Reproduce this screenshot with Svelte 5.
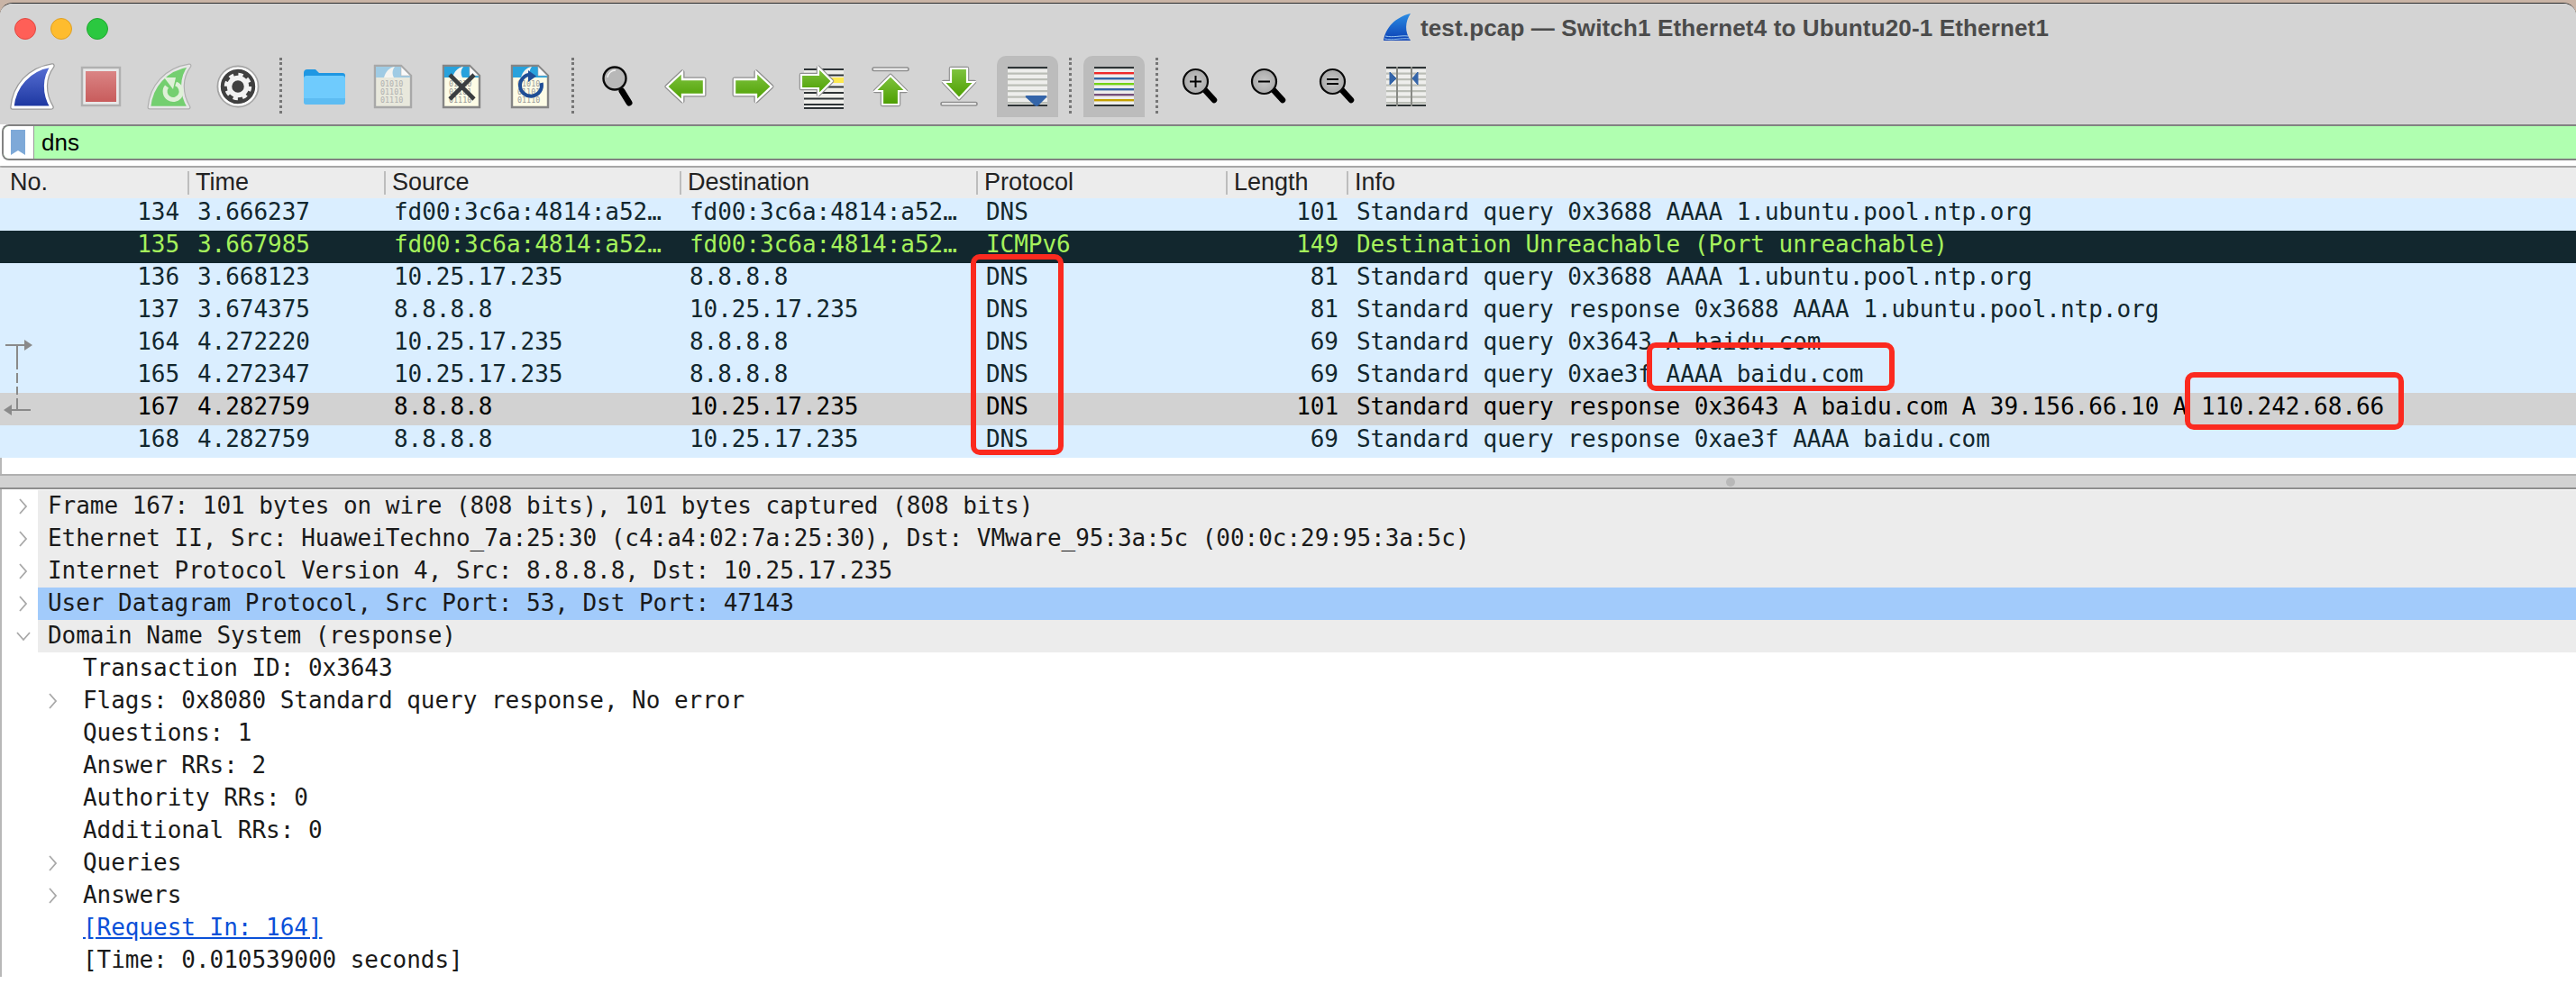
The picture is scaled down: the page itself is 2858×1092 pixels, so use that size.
<script>
  const packets = [
    { no: 134, time: '3.666237', src: 'fd00:3c6a:4814:a52…', dst: 'fd00:3c6a:4814:a52…', proto: 'DNS', len: 101, info: 'Standard query 0x3688 AAAA 1.ubuntu.pool.ntp.org' },
    { no: 135, time: '3.667985', src: 'fd00:3c6a:4814:a52…', dst: 'fd00:3c6a:4814:a52…', proto: 'ICMPv6', len: 149, info: 'Destination Unreachable (Port unreachable)', kind: 'bad' },
    { no: 136, time: '3.668123', src: '10.25.17.235', dst: '8.8.8.8', proto: 'DNS', len: 81, info: 'Standard query 0x3688 AAAA 1.ubuntu.pool.ntp.org' },
    { no: 137, time: '3.674375', src: '8.8.8.8', dst: '10.25.17.235', proto: 'DNS', len: 81, info: 'Standard query response 0x3688 AAAA 1.ubuntu.pool.ntp.org' },
    { no: 164, time: '4.272220', src: '10.25.17.235', dst: '8.8.8.8', proto: 'DNS', len: 69, info: 'Standard query 0x3643 A baidu.com' },
    { no: 165, time: '4.272347', src: '10.25.17.235', dst: '8.8.8.8', proto: 'DNS', len: 69, info: 'Standard query 0xae3f AAAA baidu.com' },
    { no: 167, time: '4.282759', src: '8.8.8.8', dst: '10.25.17.235', proto: 'DNS', len: 101, info: 'Standard query response 0x3643 A baidu.com A 39.156.66.10 A 110.242.68.66', kind: 'sel' },
    { no: 168, time: '4.282759', src: '8.8.8.8', dst: '10.25.17.235', proto: 'DNS', len: 69, info: 'Standard query response 0xae3f AAAA baidu.com' }
  ];
  const tree = [
    { t: 'Frame 167: 101 bytes on wire (808 bits), 101 bytes captured (808 bits)', top: true, ch: 'r', cls: 'grey' },
    { t: 'Ethernet II, Src: HuaweiTechno_7a:25:30 (c4:a4:02:7a:25:30), Dst: VMware_95:3a:5c (00:0c:29:95:3a:5c)', top: true, ch: 'r', cls: 'grey' },
    { t: 'Internet Protocol Version 4, Src: 8.8.8.8, Dst: 10.25.17.235', top: true, ch: 'r', cls: 'grey' },
    { t: 'User Datagram Protocol, Src Port: 53, Dst Port: 47143', top: true, ch: 'r', cls: 'picked' },
    { t: 'Domain Name System (response)', top: true, ch: 'd', cls: 'grey' },
    { t: 'Transaction ID: 0x3643' },
    { t: 'Flags: 0x8080 Standard query response, No error', ch: 'r' },
    { t: 'Questions: 1' },
    { t: 'Answer RRs: 2' },
    { t: 'Authority RRs: 0' },
    { t: 'Additional RRs: 0' },
    { t: 'Queries', ch: 'r' },
    { t: 'Answers', ch: 'r' },
    { t: '[Request In: 164]', link: true },
    { t: '[Time: 0.010539000 seconds]' }
  ];
  const finPath = 'M12 57C14 34 30 15 56 11C46 24 46 42 55 57Z';
  const binLines = ['01010', '01101', '01110'];
  const grayStripes = [18.5, 25, 31.5, 38, 44.5, 51];
  const jumpStripes = [14, 20.5, 33.5, 40, 46.5, 53, 57];
  const colorStripes = [
    ['#ef2929', 18], ['#3465a4', 24], ['#73d216', 30], ['#3465a4', 36], ['#75507b', 42], ['#c4a000', 48]
  ];
</script>

{#snippet shell(stroke, band, paper, txt, extra)}
  <svg class="ic" viewBox="0 0 68 68">
    <path d="M14 11H43L54 22V57H14Z" fill={paper} stroke={stroke} stroke-width="2.4" />
    <path d="M15 12H42.5L53 22.5V24H15Z" fill={band} />
    <path d="M24 24C26 17 30 13 36 12C33 16 33 20 35 24Z" fill="#f4f4f0" />
    <path d="M43 12V22H53Z" fill="#fafafa" stroke="#b5b5b5" stroke-width="0.6" />
    {#each binLines as line, i}
      <text x="20" y={34 + i * 9} class="bin" fill={txt}>{line}</text>
    {/each}
    {#if extra === 'x'}
      <path d="M21 21L48 48M48 21L21 48" stroke="#3a3d40" stroke-width="4.6" fill="none" />
    {:else if extra === 'r'}
      <path d="M35 20.7A12 12 0 1 0 46.7 30" stroke="#1f4e96" stroke-width="4" fill="none" />
      <path d="M32 16L41 22.5L32 29Z" fill="#1f4e96" />
    {/if}
  </svg>
{/snippet}

{#snippet glass(kind)}
  <svg class="ic" viewBox="0 0 68 68">
    <defs>
      <radialGradient id={'gl' + kind} cx="50%" cy="50%" r="60%">
        <stop offset="0" stop-color="#c8c8c8" /><stop offset="1" stop-color="#a4a4a4" />
      </radialGradient>
    </defs>
    <path d="M38 37L49 49" stroke="#000" stroke-width="6.5" stroke-linecap="round" />
    <circle cx="28.5" cy="28.5" r="13.5" fill={'url(#gl' + kind + ')'} stroke="#0a0a0a" stroke-width="2.2" />
    {#if kind === 'in'}
      <path d="M22 28.5H35M28.5 22V35" stroke="#000" stroke-width="2" />
    {:else if kind === 'out'}
      <path d="M22 28.5H35" stroke="#000" stroke-width="2.2" />
    {:else}
      <path d="M22 26H35M22 31H35" stroke="#000" stroke-width="2.2" />
    {/if}
  </svg>
{/snippet}

{#snippet chevron(dir)}
  {#if dir === 'd'}
    <svg class="chev" viewBox="0 0 18 18"><path d="M2 5L9 13L16 5" /></svg>
  {:else if dir === 'r'}
    <svg class="chev" viewBox="0 0 18 18"><path d="M5 1L12 9L5 17" /></svg>
  {/if}
{/snippet}

<div class="window">
  <header class="titlebar">
    <div class="lights">
      <span class="light red"></span><span class="light amber"></span><span class="light green"></span>
    </div>
    <div class="title">
      <svg class="title-fin" viewBox="0 0 32 31">
        <defs>
          <linearGradient id="tf" x1="0" y1="0" x2="0" y2="1">
            <stop offset="0" stop-color="#2b8de4" /><stop offset="1" stop-color="#0b3fb4" />
          </linearGradient>
        </defs>
        <path d="M1 30C3 16 14 4 31 0C25 9 24 20 31 30Z" fill="url(#tf)" />
        <path d="M3 25C12 27 20 24 28 25M2 28C12 30 20 27 30 28" stroke="#9cc8ef" stroke-width="1" fill="none" />
      </svg>
      <span>test.pcap — Switch1 Ethernet4 to Ubuntu20-1 Ethernet1</span>
    </div>
  </header>

  <div class="toolbar">
    <div class="tool">
      <svg class="ic" viewBox="0 0 68 68">
        <defs>
          <linearGradient id="blue" x1="0" y1="0" x2="0" y2="1">
            <stop offset="0" stop-color="#5870d4" /><stop offset="1" stop-color="#1c36a0" />
          </linearGradient>
        </defs>
        <path d={finPath} fill="none" stroke="#9a9a9a" stroke-width="5.5" stroke-linejoin="round" />
        <path d={finPath} fill="url(#blue)" stroke="#fff" stroke-width="3" stroke-linejoin="round" />
      </svg>
    </div>
    <div class="tool">
      <svg class="ic" viewBox="0 0 68 68">
        <defs>
          <linearGradient id="red" x1="0" y1="0" x2="0" y2="1">
            <stop offset="0" stop-color="#da8484" /><stop offset="1" stop-color="#c85c5c" />
          </linearGradient>
        </defs>
        <rect x="13" y="13" width="42" height="42" fill="#e8e8e8" stroke="#b0b0b0" stroke-width="2.4" />
        <rect x="17" y="17" width="34" height="34" fill="url(#red)" />
      </svg>
    </div>
    <div class="tool">
      <svg class="ic" viewBox="0 0 68 68">
        <path d={finPath} fill="none" stroke="#b0b0b0" stroke-width="5" stroke-linejoin="round" />
        <path d={finPath} fill="#74cf70" stroke="#e6e6e6" stroke-width="2.6" stroke-linejoin="round" />
        <path d="M41 31A9 9 0 1 1 31 34" fill="none" stroke="#dff0d8" stroke-width="5" />
        <path d="M28 24L41 24L38 37Z" fill="#dff0d8" />
      </svg>
    </div>
    <div class="tool">
      <svg class="ic" viewBox="0 0 68 68">
        <circle cx="34" cy="34" r="22.5" fill="#404040" stroke="#a5a5a5" stroke-width="2" />
        <circle cx="34" cy="34" r="20.5" fill="none" stroke="#fff" stroke-width="2.6" />
        <circle cx="34" cy="34" r="9.5" fill="none" stroke="#f2f2f2" stroke-width="5.5" />
        <circle cx="34" cy="34" r="13.2" fill="none" stroke="#f2f2f2" stroke-width="4" stroke-dasharray="5.2 5.17" />
      </svg>
    </div>
    <div class="sep"></div>
    <div class="tool">
      <svg class="ic" viewBox="0 0 68 68">
        <path d="M11 19Q11 15 15 15H24L28 19H54Q57 19 57 22V30H11Z" fill="#1f97e2" />
        <path d="M11 25Q11 22 14 22H54Q57 22 57 25V51Q57 54 54 54H14Q11 54 11 51Z" fill="#6fcbfd" />
        <path d="M11 47H57V51Q57 54 54 54H14Q11 54 11 51Z" fill="#5dbcf2" />
      </svg>
    </div>
    <div class="tool">{@render shell('#a8a8a8', '#9fcbe4', '#e8e8dc', '#b0b0b0', '')}</div>
    <div class="tool">{@render shell('#858585', '#28a2dc', '#fdfce6', '#999', 'x')}</div>
    <div class="tool">{@render shell('#858585', '#28a2dc', '#fdfce6', '#999', 'r')}</div>
    <div class="sep"></div>
    <div class="tool">
      <svg class="ic" viewBox="0 0 68 68">
        <path d="M40 39L48 52" stroke="#000" stroke-width="7" stroke-linecap="round" />
        <circle cx="32" cy="25" r="12.5" fill="#b8b8b8" stroke="#0a0a0a" stroke-width="2.4" />
        <path d="M24 24A9 9 0 0 1 33 16" stroke="#f2f2f2" stroke-width="1.4" fill="none" />
      </svg>
    </div>
    <div class="tool">
      <svg class="ic" viewBox="0 0 68 68">
        <defs>
          <linearGradient id="grn" x1="0" y1="0" x2="0" y2="1">
            <stop offset="0" stop-color="#80c440" /><stop offset="1" stop-color="#4c9e00" />
          </linearGradient>
        </defs>
        <path d="M14 34L31 18V26H55V43H31V50Z" fill="none" stroke="#8e8e8e" stroke-width="5" stroke-linejoin="round" />
        <path d="M14 34L31 18V26H55V43H31V50Z" fill="url(#grn)" stroke="#fff" stroke-width="2.4" />
      </svg>
    </div>
    <div class="tool">
      <svg class="ic" viewBox="0 0 68 68">
        <path d="M54 34L37 18V26H13V43H37V50Z" fill="none" stroke="#8e8e8e" stroke-width="5" stroke-linejoin="round" />
        <path d="M54 34L37 18V26H13V43H37V50Z" fill="url(#grn)" stroke="#fff" stroke-width="2.4" />
      </svg>
    </div>
    <div class="tool">
      <svg class="ic" viewBox="0 0 68 68">
        <rect x="14" y="14" width="44" height="44" fill="#eeeeea" />
        {#each jumpStripes as y}<rect x="14" {y} width="44" height="2" fill="#2e3436" />{/each}
        <rect x="14" y="24" width="44" height="6" fill="#fce94f" />
        <path d="M45 28L30 13V21H11V36H30V43Z" fill="none" stroke="#8e8e8e" stroke-width="4.5" stroke-linejoin="round" />
        <path d="M45 28L30 13V21H11V36H30V43Z" fill="url(#grn)" stroke="#fff" stroke-width="2.2" />
      </svg>
    </div>
    <div class="tool">
      <svg class="ic" viewBox="0 0 68 68">
        <rect x="14" y="13" width="40" height="3.5" rx="1.7" fill="#f4f4f4" stroke="#8e8e8e" stroke-width="1.6" />
        <path d="M34 22L51 39H43V54H25V39H17Z" fill="none" stroke="#8e8e8e" stroke-width="4.5" stroke-linejoin="round" />
        <path d="M34 22L51 39H43V54H25V39H17Z" fill="url(#grn)" stroke="#fff" stroke-width="2.2" />
      </svg>
    </div>
    <div class="tool">
      <svg class="ic" viewBox="0 0 68 68">
        <rect x="14" y="51.5" width="40" height="3.5" rx="1.7" fill="#f4f4f4" stroke="#8e8e8e" stroke-width="1.6" />
        <path d="M34 47L51 29H43V14H25V29H17Z" fill="none" stroke="#8e8e8e" stroke-width="4.5" stroke-linejoin="round" />
        <path d="M34 47L51 29H43V14H25V29H17Z" fill="url(#grn)" stroke="#fff" stroke-width="2.2" />
      </svg>
    </div>
    <div class="tool on">
      <svg class="ic" viewBox="0 0 68 68">
        <rect x="12" y="12" width="44" height="44" fill="#eeeeec" />
        {#each grayStripes as y}<rect x="12" {y} width="44" height="2.2" fill="#babdb6" />{/each}
        <rect x="12" y="12" width="44" height="2.2" fill="#2e3436" />
        <rect x="12" y="54" width="44" height="2" fill="#2e3436" />
        <path d="M33 44H54Q56 44 55 46L46 55Q44 57 42 55L32 46Q31 44 33 44Z" fill="#3465a9" />
      </svg>
    </div>
    <div class="sep"></div>
    <div class="tool on">
      <svg class="ic" viewBox="0 0 68 68">
        <rect x="12" y="12" width="44" height="44" fill="#eeeeec" />
        <rect x="12" y="12" width="44" height="2.2" fill="#2e3436" />
        {#each colorStripes as [c, y]}<rect x="12" {y} width="44" height="2.4" fill={c} />{/each}
        <rect x="12" y="54" width="44" height="2" fill="#2e3436" />
      </svg>
    </div>
    <div class="sep"></div>
    <div class="tool">{@render glass('in')}</div>
    <div class="tool">{@render glass('out')}</div>
    <div class="tool">{@render glass('eq')}</div>
    <div class="tool">
      <svg class="ic" viewBox="0 0 68 68">
        <rect x="12" y="12" width="44" height="44" fill="#eeeeec" />
        {#each grayStripes as y}<rect x="12" {y} width="44" height="2.2" fill="#babdb6" />{/each}
        <rect x="12" y="12" width="44" height="2.2" fill="#2e3436" />
        <rect x="12" y="54" width="44" height="2" fill="#2e3436" />
        <rect x="23" y="12" width="2" height="44" fill="#888a85" />
        <rect x="39" y="12" width="2" height="44" fill="#888a85" />
        <path d="M16 18L23 25L16 32Z" fill="#3465a9" stroke="#3465a9" stroke-linejoin="round" />
        <path d="M47 18L41 25L47 32Z" fill="#3465a9" stroke="#3465a9" stroke-linejoin="round" />
      </svg>
    </div>
  </div>

  <div class="filter">
    <div class="bookmark">
      <svg width="16" height="28" viewBox="0 0 16 28"><path d="M0 0H16V28L8 23L0 28Z" fill="#7ea9d8" /></svg>
    </div>
    <div class="filter-text">dns</div>
  </div>

  <section class="packets">
    <div class="grid head">
      <div>No.</div><div>Time</div><div>Source</div><div>Destination</div><div>Protocol</div><div>Length</div><div>Info</div>
    </div>
    {#each packets as p}
      <div class="grid row {p.kind ?? ''}">
        <div class="num">{p.no}</div>
        <div>{p.time}</div>
        <div>{p.src}</div>
        <div>{p.dst}</div>
        <div>{p.proto}</div>
        <div class="num">{p.len}</div>
        <div>{p.info}</div>
      </div>
    {/each}
    <div class="blank"></div>
    <svg class="related" width="40" height="90" viewBox="0 0 40 90">
      <path d="M6 9H28M19 9V36M19 40V51M19 55V64M19 68V81M34 81H12" stroke="#8a8a8a" stroke-width="2" fill="none" />
      <path d="M27 3L36 9L27 15Z" fill="#8a8a8a" />
      <path d="M4 81L13 75V87Z" fill="#8a8a8a" />
    </svg>
    <div class="mark mark-proto"></div>
    <div class="mark mark-aaaa"></div>
    <div class="mark mark-ip"></div>
  </section>

  <div class="splitter"><span class="handle"></span></div>

  <section class="tree">
    {#each tree as n}
      <div class="node {n.top ? 'top' : 'sub'}">
        <div class="gutter">{@render chevron(n.ch)}</div>
        <div class="label {n.cls ?? ''}">
          {#if n.link}<span class="link">{n.t}</span>{:else}{n.t}{/if}
        </div>
      </div>
    {/each}
  </section>
</div>

<style>
  :global(body) {
    margin: 0;
    background: #c9b4a6;
    overflow: hidden;
  }
  .window {
    margin-top: 3px;
    height: 1089px;
    background: #fff;
    border-radius: 14px 14px 0 0;
    border-top: 1px solid #2c2c2c;
    overflow: hidden;
    box-sizing: border-box;
  }
  .titlebar {
    height: 58px;
    background: #d4d4d4;
    display: flex;
    align-items: flex-start;
    position: relative;
  }
  .lights {
    display: flex;
    gap: 16px;
    padding: 16px 0 0 16px;
  }
  .light {
    width: 24px;
    height: 24px;
    border-radius: 50%;
    box-sizing: border-box;
  }
  .red { background: #ff5f57; border: 1px solid #e14942; }
  .amber { background: #febc2e; border: 1px solid #dfa023; }
  .green { background: #2bc840; border: 1px solid #1fa82e; }
  .title {
    margin-left: auto;
    padding: 11px 585px 0 0;
    display: flex;
    align-items: center;
    gap: 10px;
    font: 700 26px/30px "Liberation Sans", sans-serif;
    letter-spacing: 0.15px;
    color: #4b4b4b;
    white-space: nowrap;
  }
  .title-fin { width: 32px; height: 31px; }
  .toolbar {
    height: 76px;
    background: #d4d4d4;
    display: flex;
    align-items: flex-start;
    gap: 8px;
    padding-left: 2px;
    box-sizing: border-box;
  }
  .tool {
    width: 68px;
    height: 68px;
    flex: none;
    border-radius: 10px 10px 0 0;
  }
  .tool.on { background: #bcbcbc; }
  .ic { width: 68px; height: 68px; display: block; }
  .bin { font: 8.4px "DejaVu Sans Mono", monospace; }
  .sep {
    flex: none;
    width: 0;
    height: 62px;
    margin: 2px 5px 0 4px;
    border-left: 3px dotted #767676;
  }
  .filter {
    height: 40px;
    box-sizing: border-box;
    border-top: 2px solid #828282;
    border-bottom: 2px solid #828282;
    border-left: 2px solid #828282;
    border-radius: 8px 0 0 8px;
    margin-left: 2px;
    display: flex;
    background: #b0ffb0;
  }
  .bookmark {
    width: 34px;
    flex: none;
    background: #fff;
    border-right: 1px solid #9a9a9a;
    box-sizing: border-box;
    padding: 4px 0 0 8px;
    border-radius: 6px 0 0 6px;
  }
  .filter-text {
    font: 26px/36px "Liberation Sans", sans-serif;
    color: #000;
    padding-left: 8px;
  }
  .packets {
    position: relative;
    margin-top: 6px;
    border-top: 2px solid #a6a6a6;
    border-left: 2px solid #b8b8b8;
  }
  .grid {
    display: grid;
    grid-template-columns: 206px 218px 328px 329px 277px 134px 1fr;
    height: 36px;
    margin-left: -2px;
    padding-left: 2px;
    box-sizing: border-box;
  }
  .head {
    height: 34px;
    background: #ececec;
    font: 27px/33px "Liberation Sans", sans-serif;
    color: #222;
  }
  .head > div {
    padding-left: 9px;
    position: relative;
  }
  .head > div + div::before {
    content: "";
    position: absolute;
    left: 0;
    top: 4px;
    bottom: 4px;
    width: 2px;
    background: #bdbdbd;
  }
  .row {
    background: #daeeff;
    color: #12272e;
    font: 26px/30px "DejaVu Sans Mono", monospace;
    letter-spacing: -0.035px;
    white-space: pre;
  }
  .row > div { padding-left: 11px; }
  .row > .num { text-align: right; padding: 0 9px 0 0; }
  .row.bad { background: #12272e; color: #a5f25c; }
  .row.sel { background: #d2d2d2; color: #000; }
  .blank { height: 18px; background: #fff; }
  .related {
    position: absolute;
    left: -2px;
    top: 188px;
  }
  .mark {
    position: absolute;
    box-sizing: border-box;
    border: 6px solid #fb2a1f;
    border-radius: 10px;
  }
  .mark-proto { left: 1075px; top: 96px; width: 103px; height: 223px; }
  .mark-aaaa { left: 1825px; top: 194px; width: 275px; height: 54px; }
  .mark-ip { left: 2422px; top: 227px; width: 243px; height: 64px; }
  .splitter {
    height: 17px;
    background: #d2d2d2;
    border-top: 2px solid #b0b0b0;
    border-bottom: 2px solid #8e8e8e;
    box-sizing: border-box;
    position: relative;
  }
  .handle {
    position: absolute;
    left: 1915px;
    top: 2px;
    width: 10px;
    height: 10px;
    border-radius: 50%;
    background: #b8b8b8;
  }
  .tree {
    border-left: 2px solid #b8b8b8;
    padding-top: 1px;
    font: 26px/34px "DejaVu Sans Mono", monospace;
    letter-spacing: -0.035px;
    color: #1a1a1a;
    white-space: pre;
  }
  .node { display: flex; height: 36px; }
  .gutter {
    flex: none;
    display: flex;
    align-items: center;
  }
  .top .gutter { width: 40px; justify-content: center; padding-left: 8px; box-sizing: border-box; }
  .sub .gutter { width: 78px; justify-content: flex-end; padding-right: 12px; box-sizing: border-box; }
  .label { flex: 1; padding-left: 11px; }
  .sub .label { padding-left: 12px; }
  .label.grey { background: #ececec; }
  .label.picked { background: #a2cbfb; }
  .link { color: #0a50d8; text-decoration: underline; }
  .chev {
    width: 18px;
    height: 18px;
    fill: none;
    stroke: #a8a8a8;
    stroke-width: 1.8;
  }
</style>
